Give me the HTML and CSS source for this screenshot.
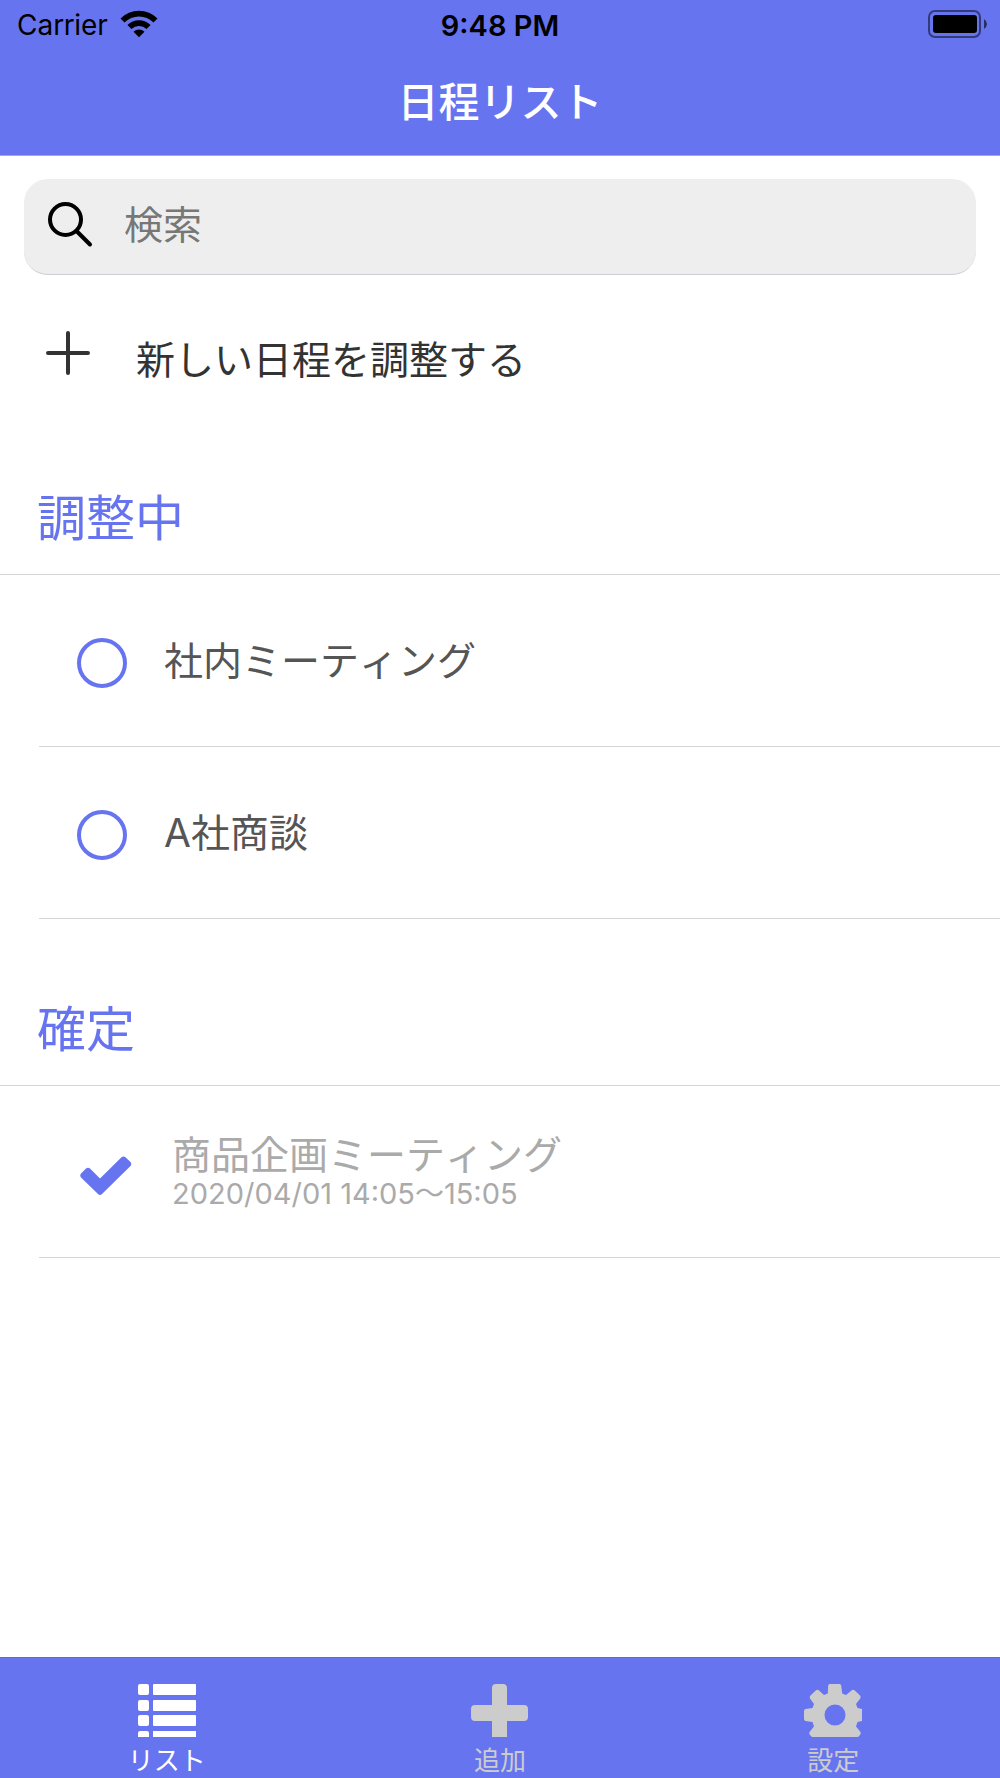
FILE: index.html
```html
<!DOCTYPE html>
<html lang="ja">
<head>
  <meta charset="UTF-8">
  <meta name="viewport" content="width=device-width, initial-scale=1.0">
  <title>日程リスト</title>
  <link rel="stylesheet" href="styles.css">
</head>
<body>

  <header class="header">
    <!-- Status bar -->
    <div class="status">
      <div class="carrier">
        <span>Carrier</span>
        <svg width="38" height="28" viewBox="0 0 38 28" aria-hidden="true">
          <path d="M.500 8.500A26 26 0 0 1 37.500 8.500L33.500 12.500A20.500 20.500 0 0 0 4.500 12.500Z"/>
          <path d="M7.400 15A16.500 16.500 0 0 1 30.600 15L26.500 19A11 11 0 0 0 11.500 19Z"/>
          <path d="M13.500 21.700A8 8 0 0 1 24.500 21.700L19 27.200Z"/>
        </svg>
      </div>
      <span class="time">9:48 PM</span>
      <svg class="battery" width="60" height="28" viewBox="0 0 60 28" aria-hidden="true">
        <rect x="1" y="1" width="51" height="26" rx="6" fill="none" stroke="#000" stroke-opacity=".5" stroke-width="2"/>
        <rect x="5" y="5" width="44" height="18" rx="3"/>
        <path d="M56 9Q59 11 59 14T56 19Z" fill-opacity=".6"/>
      </svg>
    </div>
    <h1>日程リスト</h1>
  </header>

  <main class="content">
    <!-- Search box -->
    <div class="search">
      <label for="search" aria-label="検索">
        <svg width="46" height="46" viewBox="0 0 46 46" fill="none" stroke="#000" stroke-width="4" stroke-linecap="round" aria-hidden="true">
          <circle cx="17.500" cy="17.500" r="15.500"/>
          <path d="M29 29.500L42 42.500"/>
        </svg>
      </label>
      <input type="text" id="search" placeholder="検索">
    </div>

    <button type="button" class="new-plan">
      <svg width="44" height="44" viewBox="0 0 44 44" fill="none" stroke="#333" stroke-width="4" stroke-linecap="round" aria-hidden="true">
        <path d="M22 2V42M2 22H42"/>
      </svg>
      <span>新しい日程を調整する</span>
    </button>

    <!-- Plans still being arranged -->
    <section>
      <h2>調整中</h2>
      <ul class="plans">
        <li>
          <input type="checkbox" id="plan1">
          <label for="plan1">社内ミーティング</label>
        </li>
        <li>
          <input type="checkbox" id="plan2">
          <label for="plan2">A社商談</label>
        </li>
      </ul>
    </section>

    <!-- Fixed plans -->
    <section>
      <h2>確定</h2>
      <ul class="plans">
        <li class="done">
          <span class="check">
            <input type="checkbox" id="plan3" checked>
            <svg width="52" height="40" viewBox="0 0 52 40" aria-hidden="true">
              <path d="M1 21.500Q-.500 19.500 1 17.500L6 12.500Q8 11 10 12.500L20 22.500L41.500 1.200Q43.500 -.300 45.500 1.200L50.500 6Q52 8 50.500 10L22 38Q20 39.800 18 38Z" fill="#6774f0"/>
            </svg>
          </span>
          <label for="plan3">商品企画ミーティング<small>2020/04/01 14:05〜15:05</small></label>
        </li>
      </ul>
    </section>
  </main>

  <!-- Bottom tabs -->
  <nav class="tabs">
    <a href="#list" class="active">
      <svg width="60" height="53" viewBox="0 0 60 53" aria-hidden="true">
        <rect x="1" y="0" width="11" height="11" rx="2"/>
        <rect x="16" y="0" width="43" height="11" rx="1"/>
        <rect x="1" y="16" width="11" height="11" rx="2"/>
        <rect x="16" y="16" width="43" height="11" rx="1"/>
        <rect x="1" y="31" width="11" height="11" rx="2"/>
        <rect x="16" y="31" width="43" height="11" rx="1"/>
        <path d="M1 53V49Q1 47 3 47H10Q12 47 12 49V53ZM16 53V47H59V53Z"/>
      </svg>
      <span>リスト</span>
    </a>
    <a href="#add">
      <svg width="60" height="53" viewBox="0 0 60 53" aria-hidden="true">
        <path d="M22 53V37H5Q1 37 1 33V25Q1 21 5 21H22V4Q22 0 26 0H33Q37 0 37 4V21H54Q58 21 58 25V33Q58 37 54 37H37V53Z"/>
      </svg>
      <span>追加</span>
    </a>
    <a href="#settings">
      <svg width="60" height="53" viewBox="0 0 60 53" aria-hidden="true">
        <path fill-rule="evenodd" d="M26.500 0H36.500Q38 0 38.200 1.500L39.200 9.500L43 11L48.500 6.500Q50 5 51.500 6.200L57 11.500Q58.300 13 57.200 14.500L53 20L54.500 24L59 25V37L54.500 38L53 42.500L57.500 48Q58.300 49.500 57 51L55 53H9L7 51Q5.700 49.500 6.500 48L11 42.500L9.500 38L2.500 37Q1 36.700 1 35V27Q1 25.300 2.500 25L9.500 24L11 20L7 14.500Q6 13 7.500 11.500L13 6.200Q14.500 5 16 6.500L21 11L24.800 9.500L25.200 1.500Q25.500 0 26.500 0ZM32 20.500A10.500 10.500 0 1 0 32 41.500A10.500 10.500 0 1 0 32 20.500Z"/>
      </svg>
      <span>設定</span>
    </a>
  </nav>

</body>
</html>
```

FILE: styles.css
```css
* {
  box-sizing: border-box;
}

body {
  margin: 0;
  min-height: 100vh;
  display: flex;
  flex-direction: column;
  background: #fff;
  color: #333;
  font-family: Inter, "Noto Sans CJK JP", sans-serif;
  font-size: 39px;
  font-weight: 400;
  font-kerning: none;
}

/* Header */
.header {
  background: #6774f0;
  border-bottom: 1px solid #a9abc4;
  padding-bottom: 24px;
}

.status {
  display: grid;
  grid-template-columns: 1fr auto 1fr;
  align-items: center;
  height: 50px;
  padding: 0 12px;
  color: #000;
  font-size: 28px;
}

.carrier {
  display: flex;
  align-items: center;
  gap: 12px;
  padding-left: 5px;
}

.carrier svg {
  margin-bottom: 2px;
}

.time {
  font-size: 29px;
  font-weight: 600;
}

.battery {
  justify-self: end;
  margin-bottom: 2px;
}

h1 {
  margin: 23px 0 0;
  color: #fff;
  font-size: 41px;
  font-weight: 500;
  line-height: 58px;
  text-align: center;
}

.content {
  flex: 1;
}

/* Search box */
.search {
  display: flex;
  align-items: center;
  height: 96px;
  margin: 23px 24px 0;
  padding: 0 24px 4px;
  background: #eee;
  border-bottom: 1px solid #cdcdd8;
  border-radius: 24px;
}

.search label {
  display: flex;
}

.search input {
  flex: 1;
  min-width: 0;
  margin-left: 30px;
  padding: 0;
  border: none;
  outline: none;
  background: none;
  color: #333;
  font: inherit;
}

.search input::placeholder {
  color: #777;
  opacity: 1;
}

.new-plan {
  display: flex;
  align-items: center;
  gap: 46px;
  width: 100%;
  height: 152px;
  padding: 4px 46px 0;
  border: none;
  background: none;
  color: #333;
  font: inherit;
  cursor: pointer;
}

.new-plan span {
  padding-top: 8px;
}

/* Sections */
h2 {
  margin: 0;
  height: 148px;
  padding: 56px 37px 0;
  border-bottom: 1px solid #d5d5d5;
  color: #6774f0;
  font-size: 49px;
  font-weight: 400;
  line-height: 72px;
}

.plans {
  margin: 0 0 19px;
  padding: 0 0 0 39px;
  list-style: none;
}

.plans li {
  display: flex;
  align-items: center;
  gap: 37px;
  min-height: 172px;
  padding-left: 38px;
  border-bottom: 1px solid #d5d5d5;
  color: #555;
}

.plans input {
  width: 50px;
  height: 50px;
  margin: 4px 0 0;
  appearance: none;
  border: 4px solid #6774f0;
  border-radius: 50%;
}

.plans .done {
  gap: 40px;
  padding-left: 41px;
  color: #aaa;
}

.plans label {
  line-height: 44px;
}

.plans small {
  display: block;
  font-size: 29px;
  line-height: 34px;
}

/* The tick lies over its own checkbox */
.check {
  display: grid;
  place-items: center;
}

.check input,
.check svg {
  grid-area: 1 / 1;
}

.check input {
  border: none;
}

.check svg {
  margin-top: 8px;
  pointer-events: none;
}

/* Bottom tabs */
.tabs {
  display: grid;
  grid-template-columns: repeat(3, 1fr);
  padding: 26px 0 4px;
  background: #6774f0;
  border-top: 1px solid #6b6d94;
}

.tabs a {
  display: flex;
  flex-direction: column;
  align-items: center;
  gap: 11px;
  color: #ccc;
  font-size: 26px;
  line-height: 26px;
  text-decoration: none;
}

.tabs svg {
  fill: currentColor;
}

.tabs .active {
  color: #fff;
}
```
